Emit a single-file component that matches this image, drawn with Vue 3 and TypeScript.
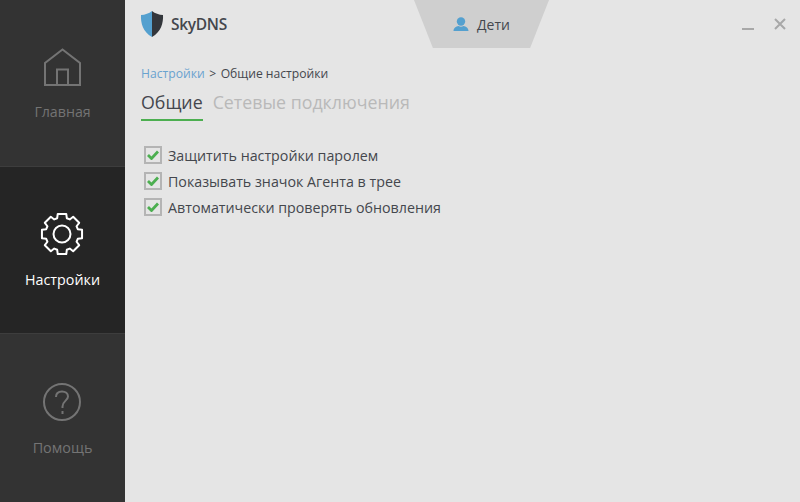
<script setup lang="ts">
const options: string[] = [
  'Защитить настройки паролем',
  'Показывать значок Агента в трее',
  'Автоматически проверять обновления',
]

function pt(r: number, deg: number): string {
  const a = (deg * Math.PI) / 180
  return `${(22 + r * Math.sin(a)).toFixed(2)} ${(22 - r * Math.cos(a)).toFixed(2)}`
}

const gearPath: string = Array.from({ length: 8 }, (_, i) => {
  const c = i * 45
  return `${pt(16.5, c - 17)} ${pt(20.5, c - 12)} ${pt(20.5, c + 12)} ${pt(16.5, c + 17)}`
})
  .join(' L')
  .replace(/^/, 'M') + 'Z'
</script>

<template>
  <div class="app">
    <aside class="side">
      <div class="nav">
        <svg class="ico" width="40" height="40" viewBox="0 0 40 40" fill="none" stroke="#747474" stroke-width="2">
          <path d="M3 37V15L20.5 1.5 38 15V37Z" />
          <path d="M15 37V21.5H26V37" />
        </svg>
        <span class="lbl">Главная</span>
      </div>
      <div class="nav active">
        <svg class="ico gear" width="44" height="44" viewBox="0 0 44 44" fill="none" stroke="#fff" stroke-width="2">
          <path :d="gearPath" stroke-linejoin="round" />
          <circle cx="22" cy="22" r="8.500" />
        </svg>
        <span class="lbl">Настройки</span>
      </div>
      <div class="nav last">
        <svg class="ico" width="40" height="40" viewBox="0 0 40 40" fill="none" stroke="#747474" stroke-width="2">
          <circle cx="20" cy="20" r="18" />
          <path d="M14 15C14 11 17 9.500 20 9.500 23.500 9.500 26 11.500 26 14.500 26 18.500 20.500 19 20.500 24.500V26" />
          <path d="M20.500 29V32" />
        </svg>
        <span class="lbl">Помощь</span>
      </div>
    </aside>

    <main class="main">
      <header class="top">
        <div class="logo">
          <svg width="24" height="26" viewBox="0 0 24 26">
            <path d="M12 0C9 2.500 5 3.800 1 4 0.500 12 3 21 12 26Z" fill="#54a0cf" />
            <path d="M12 0C15 2.500 19 3.800 23 4 23.500 12 21 21 12 26Z" fill="#33363b" />
          </svg>
          <span class="brand">SkyDNS</span>
        </div>
        <div class="profile">
          <svg width="16" height="14" viewBox="0 0 16 14">
            <circle cx="8" cy="4.500" r="4.200" fill="#54a0cf" />
            <path d="M0.500 14C0.500 11 3 9.500 5.500 9 7 10 9 10 10.500 9 13 9.500 15.500 11 15.500 14Z" fill="#54a0cf" />
          </svg>
          <span>Дети</span>
        </div>
        <div class="win">
          <span class="min"></span>
          <svg width="14" height="14" viewBox="0 0 14 14" stroke="#a8a8a8" stroke-width="2">
            <path d="M2 2L12 12M12 2L2 12" />
          </svg>
        </div>
      </header>

      <section class="content">
        <div class="crumbs">
          <span class="link">Настройки</span><span class="sep">&gt;</span><span>Общие настройки</span>
        </div>
        <div class="tabs">
          <span class="tab on">Общие</span>
          <span class="tab">Сетевые подключения</span>
        </div>
        <ul class="opts">
          <li v-for="o in options" :key="o" class="opt">
            <span class="box">
              <svg width="12" height="10" viewBox="0 0 12 10" fill="none" stroke="#4caf50" stroke-width="2.800">
                <path d="M1 5L4.500 8.500 11 1.500" />
              </svg>
            </span>
            <span>{{ o }}</span>
          </li>
        </ul>
      </section>
    </main>
  </div>
</template>

<style scoped>
.app {
  display: flex;
  width: 800px;
  height: 502px;
  overflow: hidden;
  background: #e5e5e5;
  font-family: "Open Sans", "Noto Sans", sans-serif;
  color: #44474d;
}
.side {
  width: 125px;
  flex: none;
  display: flex;
  flex-direction: column;
  background: #333333;
}
.nav {
  height: 167px;
  box-sizing: border-box;
  display: flex;
  flex-direction: column;
  align-items: center;
  padding-top: 48px;
  border-bottom: 1px solid #3d3d3d;
}
.nav.active {
  height: 167px;
  background: #252525;
  padding-top: 45px;
}
.nav.last {
  height: 168px;
  border-bottom: 0;
  padding-top: 48px;
}
.ico {
  display: block;
  margin-right: 2px;
}
.ico.gear {
  margin-right: 1px;
}
.lbl {
  margin-top: 14px;
  font-size: 14.200px;
  line-height: 20px;
  color: #747474;
}
.active .lbl {
  margin-top: 14px;
  font-size: 14.300px;
  color: #fff;
}
.last .lbl {
  margin-top: 16px;
  font-size: 14.400px;
}
.main {
  flex: 1;
  min-width: 0;
}
.top {
  height: 48px;
  display: flex;
  align-items: flex-start;
}
.logo {
  width: 289px;
  flex: none;
  box-sizing: border-box;
  padding: 11px 0 0 15px;
  display: flex;
  align-items: center;
  gap: 7px;
}
.brand {
  font-size: 15.500px;
  font-weight: 600;
  letter-spacing: -0.3px;
  color: #44474d;
}
.profile {
  width: 135px;
  height: 48px;
  flex: none;
  display: flex;
  align-items: center;
  justify-content: center;
  gap: 8px;
  box-sizing: border-box;
  font-size: 14px;
  color: #44474d;
  background: #cfcfcf;
  clip-path: polygon(0 0, 100% 0, 86% 100%, 14% 100%);
}
.win {
  flex: 1;
  display: flex;
  justify-content: flex-end;
  align-items: center;
  height: 48px;
  gap: 19px;
  padding-right: 13px;
}
.min {
  width: 12px;
  height: 2px;
  background: #a8a8a8;
  margin-top: 10px;
}
.content {
  padding: 16px 0 0 16px;
}
.crumbs {
  font-size: 12.150px;
  line-height: 20px;
  display: flex;
  color: #44474d;
}
.link {
  color: #6aa3cf;
}
.sep {
  margin: 0 4.500px;
}
.tabs {
  display: flex;
  gap: 10px;
  margin-top: 4px;
}
.tab {
  font-size: 17.800px;
  line-height: 24px;
  padding: 2px 0 5px;
  color: #b9b9b9;
}
.tab.on {
  color: #44474d;
  border-bottom: 2px solid #4caf50;
}
.opts {
  list-style: none;
  margin: 21px 0 0;
  padding: 0 0 0 3px;
}
.opt {
  display: flex;
  align-items: center;
  gap: 6px;
  height: 26px;
  font-size: 14.250px;
}
.box {
  width: 18px;
  height: 18px;
  box-sizing: border-box;
  border: 2px solid #b4b4b4;
  display: flex;
  align-items: center;
  justify-content: center;
  background: #e5e5e5;
}
</style>
